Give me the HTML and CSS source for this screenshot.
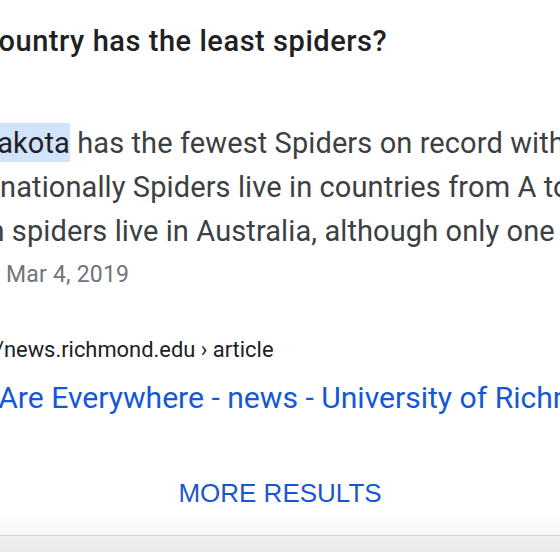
FILE: index.html
```html
<!DOCTYPE html>
<html lang="en">
<head>
<meta charset="utf-8">
<title>Which country has the least spiders?</title>
<link rel="stylesheet" href="styles.css">
</head>
<body>
<div class="page">
  <h1 class="question">Which country has the least spiders?</h1>
  <div class="answer">
    <p class="line l1"><mark class="hl">South Dakota</mark> has the fewest Spiders on record with just a few</p>
    <p class="line l2">Internationally Spiders live in countries from A to Z</p>
    <p class="line l3">known spiders live in Australia, although only one is deadly</p>
    <p class="line date">Mar 4, 2019</p>
  </div>
  <div class="result">
    <div class="url">https://news.richmond.edu › article</div>
    <a class="title" href="#">Spiders Are Everywhere - news - University of Richmond</a>
  </div>
</div>
<div class="more">
  <a class="more-link" href="#">MORE RESULTS</a>
</div>
<div class="toolbar"></div>
</body>
</html>
```
FILE: styles.css
```css
html, body {
  margin: 0;
  padding: 0;
  background: #ffffff;
}
body {
  width: 560px;
  height: 560px;
  overflow: hidden;
  font-family: Roboto, "Liberation Sans", sans-serif;
}
.page {
  white-space: nowrap;
}
.question {
  margin: 0;
  padding-top: 24px;
  font-size: 29px;
  line-height: 34px;
  font-weight: 500;
  letter-spacing: 0.55px;
  color: #202124;
  text-indent: -108px;
}
.answer {
  margin-top: 63px;
}
.line {
  margin: 0;
  font-size: 29px;
  line-height: 44px;
  letter-spacing: 0.1px;
  color: #3c4043;
}
.hl {
  background: #d2e3fc;
  color: #202124;
  padding: 3px 0 2px;
}
.l1 { text-indent: -105px; }
.l2 { text-indent: -59px; }
.l3 { text-indent: -81px; }
.date {
  font-size: 23px;
  letter-spacing: 0.2px;
  color: #70757a;
  text-indent: 6px;
}
.result {
  margin-top: 39px;
}
.url {
  font-size: 21.9px;
  line-height: 28px;
  color: #202124;
  text-indent: -67px;
}
.title {
  display: block;
  margin-top: 16px;
  font-size: 30.1px;
  line-height: 36px;
  color: #1558d6;
  text-decoration: none;
  text-indent: -110px;
}
.more {
  margin-top: 62px;
  height: 57px;
  text-align: center;
  background: linear-gradient(to bottom, #ffffff 0%, #ffffff 60%, #f6f6f6 100%);
}
.more-link {
  font-family: "Liberation Sans", Arial, sans-serif;
  font-size: 26px;
  line-height: 30px;
  color: #1a57cf;
  text-decoration: none;
}
.toolbar {
  height: 16px;
  border-top: 1px solid #d4d4d4;
  background: linear-gradient(to bottom, #efefef, #e9e9e9);
}
```
